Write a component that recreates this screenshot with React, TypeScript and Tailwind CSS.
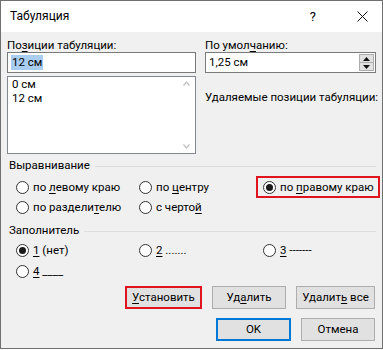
import React from "react";

const font = { fontFamily: 'Roboto, "Noto Sans", sans-serif' };

function U({ children }: { children: React.ReactNode }) {
  return <span className="underline underline-offset-2 decoration-1">{children}</span>;
}

function Radio({ checked, children }: { checked?: boolean; children: React.ReactNode }) {
  return (
    <div className="flex h-[20px] items-center">
      <span className="flex h-[13px] w-[13px] shrink-0 items-center justify-center rounded-full border border-[#333] bg-white">
        {checked && <span className="h-[7px] w-[7px] rounded-full bg-[#1a1a1a]" />}
      </span>
      <span className="ml-[4px] whitespace-nowrap">{children}</span>
    </div>
  );
}

function Group({ title }: { title: string }) {
  return (
    <div className="flex h-[15px] items-center">
      <span className="whitespace-nowrap">{title}</span>
      <span className="ml-[5px] mt-[2px] h-px flex-1 bg-[#dcdcdc]" />
    </div>
  );
}

function Button({ children, className = "" }: { children: React.ReactNode; className?: string }) {
  return (
    <div className={"flex h-[23px] items-center justify-center bg-[#e1e1e1] " + className}>
      {children}
    </div>
  );
}

export default function App() {
  return (
    <div className="h-[350px] w-[383px] bg-white text-[11.5px] leading-[15px] text-black" style={font}>
      <div className="flex h-[349px] w-[383px] flex-col border border-[#707070]">
        {/* title bar */}
        <div className="flex h-[31px] shrink-0 items-center bg-white pl-[9px]">
          <span className="flex-1 text-[12px]">Табуляция</span>
          <span className="mr-[41px] text-[13px]">?</span>
          <svg className="mr-[14px]" width="11" height="11" viewBox="0 0 11 11">
            <path d="M0.5 0.5 L10.5 10.5 M10.5 0.5 L0.5 10.5" stroke="#111" strokeWidth="1" />
          </svg>
        </div>

        {/* body */}
        <div className="flex flex-1 flex-col bg-[#f0f0f0] px-[6px]">
          <div className="mt-[6px] flex gap-[8px]">
            <div className="w-[190px]">
              <div className="h-[14px] leading-[14px]">
                По<U>з</U>иции табуляции:
              </div>
              <div className="flex h-[21px] items-center border border-[#7a7a7a] bg-white pl-[3px]">
                <span className="bg-[#a8cdf0] px-px">12 см</span>
              </div>
              <div className="mt-[3px] flex h-[78px] border border-[#828790] bg-white">
                <div className="flex-1 pl-[4px] leading-[14px]">
                  <div>0 см</div>
                  <div>12 см</div>
                </div>
                <div className="flex w-[17px] flex-col items-center justify-between py-[4px]">
                  <svg width="7" height="5" viewBox="0 0 7 5">
                    <path d="M0.5 4.5 L3.5 1 L6.5 4.5" fill="none" stroke="#c2c2c2" strokeWidth="1.3" />
                  </svg>
                  <svg width="7" height="5" viewBox="0 0 7 5">
                    <path d="M0.5 0.5 L3.5 4 L6.5 0.5" fill="none" stroke="#c2c2c2" strokeWidth="1.3" />
                  </svg>
                </div>
              </div>
            </div>
            <div className="w-[172px] pl-[1px]">
              <div className="h-[14px] leading-[14px]">
                По умол<U>ч</U>анию:
              </div>
              <div className="flex h-[21px] items-center border border-[#7a7a7a] bg-white pl-[3px]">
                <span className="flex-1">1,25 см</span>
                <div className="mr-px flex h-[17px] w-[15px] flex-col border border-[#adadad] bg-[#e1e1e1]">
                  <div className="flex flex-1 items-center justify-center border-b border-[#adadad]">
                    <svg width="7" height="4" viewBox="0 0 7 4">
                      <path d="M0 4 L3.5 0 L7 4 Z" fill="#111" />
                    </svg>
                  </div>
                  <div className="flex flex-1 items-center justify-center">
                    <svg width="7" height="4" viewBox="0 0 7 4">
                      <path d="M0 0 L3.5 4 L7 0 Z" fill="#111" />
                    </svg>
                  </div>
                </div>
              </div>
              <div className="mt-[17px] whitespace-nowrap">Удаляемые позиции табуляции:</div>
            </div>
          </div>

          <div className="mt-[4px] pl-[2px]">
            <Group title="Выравнивание" />
          </div>
          <div className="mt-[4px] grid grid-cols-[123px_124px_auto] pl-[9px]">
            <Radio>
              по <U>л</U>евому краю
            </Radio>
            <Radio>
              по <U>ц</U>ентру
            </Radio>
            <div className="relative">
              <Radio checked>
                по <U>п</U>равому краю
              </Radio>
              <span className="absolute -left-[7px] -top-[1px] h-[22px] w-[124px] border-2 border-[#e0141e]" />
            </div>
            <Radio>
              по раздели<U>т</U>елю
            </Radio>
            <Radio>
              с черто<U>й</U>
            </Radio>
          </div>

          <div className="mt-[6px] pl-[2px]">
            <Group title="Заполнитель" />
          </div>
          <div className="mt-[2px] grid grid-cols-[123px_124px_auto] pl-[9px]">
            <Radio checked>
              <U>1</U> (нет)
            </Radio>
            <Radio>
              <U>2</U> .......
            </Radio>
            <Radio>
              <U>3</U> -------
            </Radio>
            <div className="mt-px">
              <Radio>
                <U>4</U> ____
              </Radio>
            </div>
          </div>

          <div className="mt-[5px] flex justify-end gap-[10px] pr-px">
            <Button className="w-[77px] border-2 border-[#e0141e]">
              <span>
                <U>У</U>становить
              </span>
            </Button>
            <Button className="w-[74px] border border-[#adadad]">
              <span>
                Уд<U>а</U>лить
              </span>
            </Button>
            <Button className="w-[79px] border border-[#adadad]">
              <span>
                Удалит<U>ь</U> все
              </span>
            </Button>
          </div>
          <div className="mt-[9px] flex justify-end gap-[10px] pr-px">
            <Button className="w-[75px] border-2 border-[#0078d7]">OK</Button>
            <Button className="w-[74px] border border-[#adadad]">Отмена</Button>
          </div>
        </div>
      </div>
    </div>
  );
}
